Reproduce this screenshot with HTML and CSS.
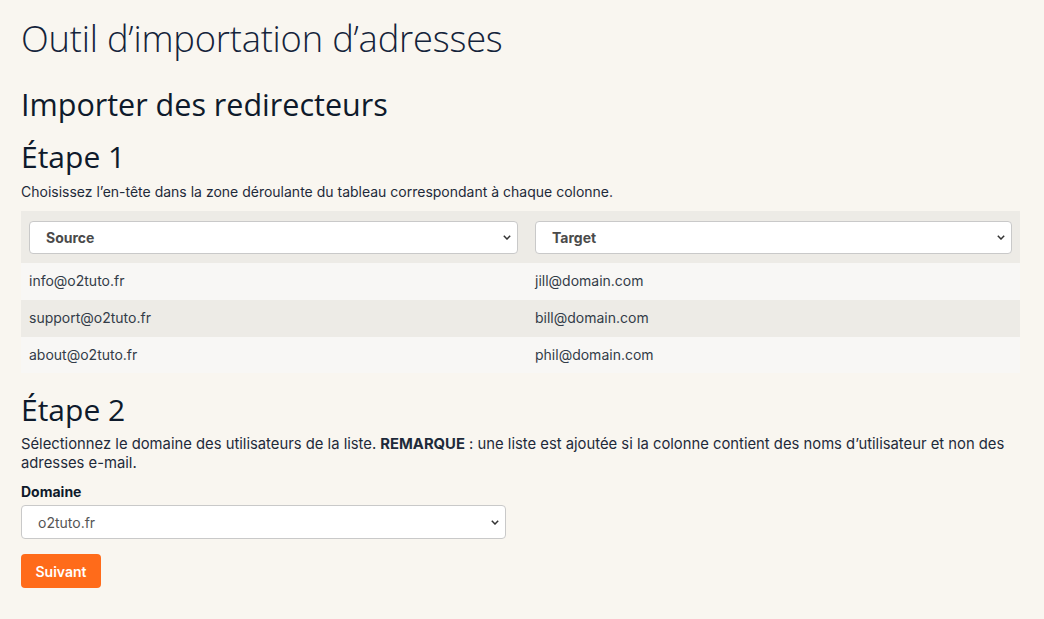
FILE: index.html
```html
<!DOCTYPE html>
<html lang="fr">
<head>
<meta charset="utf-8">
<title>Outil d’importation d’adresses</title>
<link rel="stylesheet" href="styles.css">
</head>
<body>
<main class="page">
  <h1 class="title">Outil d’importation d’adresses</h1>
  <h2 class="subtitle">Importer des redirecteurs</h2>

  <section class="step">
    <h3 class="step-title">Étape 1</h3>
    <p class="text">Choisissez l’en-tête dans la zone déroulante du tableau correspondant à chaque colonne.</p>
    <div class="table">
      <div class="row head">
        <div class="cell"><div class="select bold"><span>Source</span><svg class="chev" viewBox="0 0 8 5" width="8" height="5"><path d="M0.8 0.8l3.2 3.2 3.2-3.2" fill="none" stroke="#333" stroke-width="1.5"/></svg></div></div>
        <div class="cell"><div class="select bold"><span>Target</span><svg class="chev" viewBox="0 0 8 5" width="8" height="5"><path d="M0.8 0.8l3.2 3.2 3.2-3.2" fill="none" stroke="#333" stroke-width="1.5"/></svg></div></div>
      </div>
      <div class="row light"><div class="cell">info@o2tuto.fr</div><div class="cell">jill@domain.com</div></div>
      <div class="row dark"><div class="cell">support@o2tuto.fr</div><div class="cell">bill@domain.com</div></div>
      <div class="row light"><div class="cell">about@o2tuto.fr</div><div class="cell">phil@domain.com</div></div>
    </div>
  </section>

  <section class="step step2">
    <h3 class="step-title">Étape 2</h3>
    <p class="text">Sélectionnez le domaine des utilisateurs de la liste. <strong>REMARQUE</strong> : une liste est ajoutée si la colonne contient des noms d’utilisateur et non des adresses e-mail.</p>
    <label class="label">Domaine</label>
    <div class="select domain"><span>o2tuto.fr</span><svg class="chev" viewBox="0 0 8 5" width="8" height="5"><path d="M0.8 0.8l3.2 3.2 3.2-3.2" fill="none" stroke="#333" stroke-width="1.5"/></svg></div>
    <button class="btn">Suivant</button>
  </section>
</main>
</body>
</html>
```

FILE: styles.css
```css
* { box-sizing: border-box; }
html, body { margin: 0; padding: 0; }
body {
  background: #f9f6f0;
  color: #0e1a2b;
  font-family: Inter, "Noto Sans", sans-serif;
  width: 1044px;
  height: 619px;
  overflow: hidden;
}
.page { padding: 14px 24px 0 21px; }
.title {
  font-family: "Open Sans", sans-serif;
  font-weight: 300;
  font-size: 36.3px;
  line-height: 48px;
  margin: 0;
  color: #14233a;
  letter-spacing: -0.2px;
}
.subtitle {
  font-family: "Open Sans", sans-serif;
  font-weight: 400;
  font-size: 30.5px;
  line-height: 38px;
  margin: 23px 0 0;
  color: #0e1a2b;
}
.step-title {
  font-family: "Open Sans", sans-serif;
  font-weight: 400;
  font-size: 30px;
  line-height: 38px;
  margin: 15px 0 0;
  color: #0e1a2b;
}
.text {
  font-size: 14px;
  line-height: 19px;
  margin: 6px 0 0;
  color: #1e2a3a;
}
.text strong { font-weight: 700; }
.table { margin-top: 10px; width: 999px; }
.row { display: grid; grid-template-columns: 506px 493px; }
.row.head { background: #edebe6; height: 52px; align-items: center; }
.row.light { background: #f8f7f5; height: 37px; align-items: center; }
.row.dark { background: #edebe6; height: 37px; align-items: center; }
.row.light:last-child { height: 36px; }
.cell { padding: 0 8px 2px; font-size: 14px; color: #333c48; }
.row.head .cell { padding: 0 8px; }
.row.head .cell:first-child { padding: 0 9px 0 8px; }
.select {
  height: 33px;
  background: #fff;
  border: 1px solid #c9c9c9;
  border-radius: 4px;
  display: flex;
  align-items: center;
  justify-content: space-between;
  padding: 0 6px 0 16px;
  font-size: 14px;
  color: #444;
}
.select.bold { font-weight: 700; color: #4a4a4a; }
.chev { display: block; }
.step2 .step-title { margin-top: 18px; }
.step2 .text { margin-top: 6px; font-size: 14.8px; }
.label {
  display: block;
  font-weight: 700;
  font-size: 14px;
  line-height: 19px;
  margin-top: 9px;
  color: #0e1a2b;
}
.select.domain {
  width: 485px;
  height: 34px;
  margin-top: 4px;
  color: #555;
}
.btn {
  display: block;
  margin-top: 15px;
  width: 80px;
  height: 34px;
  border: 0;
  border-radius: 4px;
  background: #ff6b1a;
  color: #fff;
  font-family: Inter, "Noto Sans", sans-serif;
  font-weight: 600;
  font-size: 14px;
}
```
